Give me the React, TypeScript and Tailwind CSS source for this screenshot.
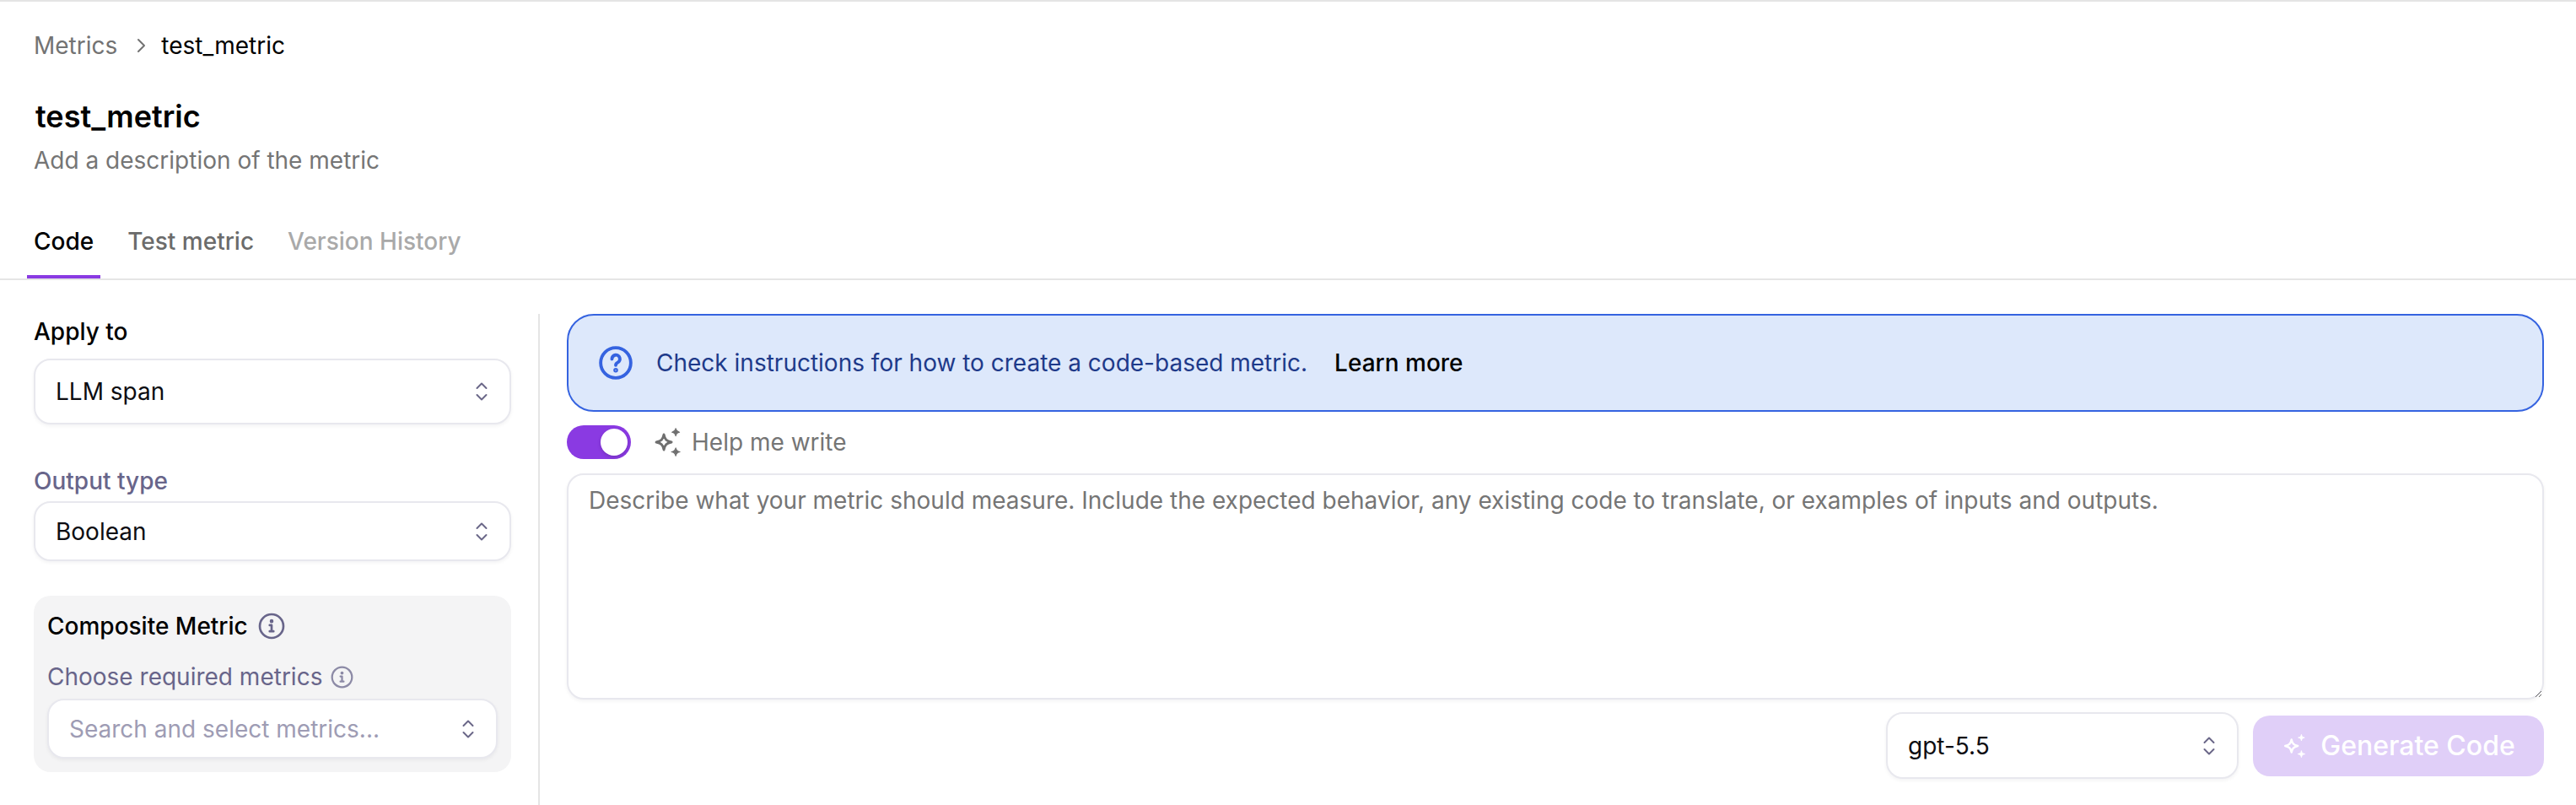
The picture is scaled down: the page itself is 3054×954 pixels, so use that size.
import React from "react";

const font = { fontFamily: "Inter, 'Liberation Sans', sans-serif" };

function UpDown({ color = "#6a6788" }: { color?: string }) {
  return (
    <svg width="16" height="24" viewBox="0 0 16 24" fill="none" stroke={color} strokeWidth="2" strokeLinecap="round" strokeLinejoin="round" className="shrink-0">
      <path d="M2.5 8 L8 2.5 L13.5 8" />
      <path d="M2.5 16 L8 21.5 L13.5 16" />
    </svg>
  );
}

function InfoIcon({ size, color }: { size: number; color: string }) {
  return (
    <svg width={size} height={size} viewBox="0 0 24 24" fill="none" stroke={color} strokeWidth="2" strokeLinecap="round" strokeLinejoin="round" className="shrink-0">
      <circle cx="12" cy="12" r="10.5" />
      <circle cx="12" cy="7.6" r="0.7" fill={color} />
      <path d="M10.3 11.2 H12 V16.6 M10.3 16.6 H13.7" />
    </svg>
  );
}

function Sparkle({ size, color }: { size: number; color: string }) {
  return (
    <svg width={size} height={size} viewBox="0 0 32 32" className="shrink-0">
      <path d="M12.5 8 C13.6 13.2 15.2 14.8 20.5 16 C15.2 17.2 13.6 18.8 12.5 24 C11.4 18.8 9.8 17.2 4.5 16 C9.8 14.8 11.4 13.2 12.5 8 Z" fill="none" stroke={color} strokeWidth="2.6" strokeLinejoin="round" />
      <path d="M25 1.5 C25.5 4.2 26.3 5 29 5.5 C26.3 6 25.5 6.8 25 9.5 C24.5 6.8 23.7 6 21 5.5 C23.7 5 24.5 4.2 25 1.5 Z" fill={color} stroke={color} strokeWidth="1" strokeLinejoin="round" />
      <path d="M25 22 C25.5 24.8 26.5 25.7 29.5 26.2 C26.5 26.7 25.5 27.6 25 30.5 C24.5 27.6 23.5 26.7 20.5 26.2 C23.5 25.7 24.5 24.8 25 22 Z" fill={color} stroke={color} strokeWidth="1" strokeLinejoin="round" />
    </svg>
  );
}

function Select({ label, heightClass, muted }: { label: string; heightClass: string; muted?: boolean }) {
  return (
    <div className={`flex w-full items-center justify-between rounded-[20px] border-2 border-[#e8e8ee] bg-white pl-[24px] pr-[25px] shadow-[0_2px_4px_rgba(20,20,40,0.05)] ${heightClass}`}>
      <span className={`text-[28px] leading-[40px] ${muted ? "text-[#9e9cb4]" : "text-[#0d0d12]"}`}>{label}</span>
      <UpDown />
    </div>
  );
}

export default function App() {
  return (
    <div style={font} className="flex h-[954px] w-full flex-col overflow-hidden border-t-2 border-[#e4e4e4] bg-white">
      <div className="flex h-[328px] shrink-0 flex-col border-b-2 border-[#e5e5e5] pl-[40px] box-content">
        <nav className="mt-[32px] flex h-[40px] items-center text-[28px] leading-[40px]">
          <span className="text-[#737373]">Metrics</span>
          <svg width="24" height="24" viewBox="0 0 24 24" fill="none" stroke="#737373" strokeWidth="2" strokeLinecap="round" strokeLinejoin="round" className="ml-[16px] mr-[12px]">
            <path d="M9 5 L16 12 L9 19" />
          </svg>
          <span className="text-black">test_metric</span>
        </nav>
        <h1 className="ml-[2px] mt-[42px] text-[36px] font-semibold leading-[44px] text-black">test_metric</h1>
        <p className="mt-[10px] text-[28px] leading-[40px] text-[#757575]">Add a description of the metric</p>
        <div className="-ml-[8px] mt-[auto] flex gap-[24px] text-[28px] leading-[40px]">
          <div className="border-b-[4px] border-[#8a3ae2] px-[8px] pb-[20px] font-medium text-black">Code</div>
          <div className="px-[8px] pb-[24px] font-medium text-[#6b6b6b]">Test metric</div>
          <div className="px-[8px] pb-[24px] font-medium text-[#a9a9a9]">Version History</div>
        </div>
      </div>

      <div className="flex min-h-0 flex-1 pt-[40px]">
        <aside className="flex w-[640px] shrink-0 flex-col border-r-2 border-[#e5e5e5] pl-[40px] pr-[32px]">
          <label className="mt-[1px] text-[28px] font-medium leading-[40px] text-black">Apply to</label>
          <div className="mt-[12px]">
            <Select label="LLM span" heightClass="h-[78px]" />
          </div>
          <label className="mt-[47px] text-[28px] font-medium leading-[40px] text-[#68658a]">Output type</label>
          <div className="mt-[4px]">
            <Select label="Boolean" heightClass="h-[71px]" />
          </div>
          <div className="mt-[41px] flex h-[209px] flex-col rounded-[20px] bg-[#f4f4f5] px-[16px]">
            <div className="mt-[16px] flex h-[40px] items-center gap-[12px]">
              <span className="text-[28px] font-medium leading-[40px] text-black">Composite Metric</span>
              <InfoIcon size={32} color="#68658a" />
            </div>
            <div className="mt-[20px] flex h-[40px] items-center gap-[10px]">
              <span className="text-[28px] leading-[40px] text-[#68658a]">Choose required metrics</span>
              <InfoIcon size={27} color="#8c8aa6" />
            </div>
            <div className="mt-[6px]">
              <Select label="Search and select metrics..." heightClass="h-[71px]" muted />
            </div>
          </div>
        </aside>

        <main className="flex min-w-0 flex-1 flex-col pl-[32px] pr-[38px]">
          <div className="flex h-[116px] shrink-0 items-center rounded-[32px] border-2 border-[#3563e0] bg-[#dde8fb] pl-[35px]">
            <svg width="42" height="42" viewBox="0 0 24 24" fill="none" stroke="#3563e0" strokeWidth="2.2" strokeLinecap="round" strokeLinejoin="round" className="shrink-0">
              <circle cx="12" cy="12" r="10.2" />
              <path d="M9.4 9.4 a2.7 2.7 0 1 1 3.9 2.4 c-0.9 0.5 -1.3 1 -1.3 1.8" />
              <circle cx="12" cy="17" r="0.5" fill="#3563e0" />
            </svg>
            <span className="ml-[27px] text-[28px] leading-[40px] text-[#1e3a8a]">Check instructions for how to create a code-based metric.</span>
            <span className="ml-[32px] text-[28px] font-medium leading-[40px] text-black">Learn more</span>
          </div>

          <div className="mt-[16px] flex h-[40px] shrink-0 items-center">
            <div className="flex h-[40px] w-[76px] items-center justify-end rounded-full bg-[#8a3ae2] pr-[4px]">
              <div className="h-[32px] w-[32px] rounded-full bg-white shadow-[0_2px_4px_rgba(0,0,0,0.15)]" />
            </div>
            <div className="ml-[25px]">
              <Sparkle size={36} color="#6f6f6f" />
            </div>
            <span className="ml-[11px] text-[28px] leading-[40px] text-[#757575]">Help me write</span>
          </div>

          <textarea
            readOnly
            placeholder="Describe what your metric should measure. Include the expected behavior, any existing code to translate, or examples of inputs and outputs."
            className="mt-[17px] h-[268px] w-full shrink-0 resize-y rounded-[20px] border-2 border-[#e8e8ee] bg-white px-[24px] py-[10px] text-[28px] leading-[40px] text-black shadow-[0_2px_4px_rgba(20,20,40,0.05)] outline-none placeholder:text-[#757575]"
          />

          <div className="mt-[15px] flex items-center justify-end gap-[17px]">
            <div className="w-[418px]">
              <Select label="gpt-5.5" heightClass="h-[79px]" />
            </div>
            <button className="flex h-[72px] w-[345px] items-center justify-center gap-[16px] rounded-[20px] bg-[#e0cff8] text-[32px] font-medium leading-[40px] text-white">
              <Sparkle size={30} color="#ffffff" />
              <span>Generate Code</span>
            </button>
          </div>
        </main>
      </div>
    </div>
  );
}
